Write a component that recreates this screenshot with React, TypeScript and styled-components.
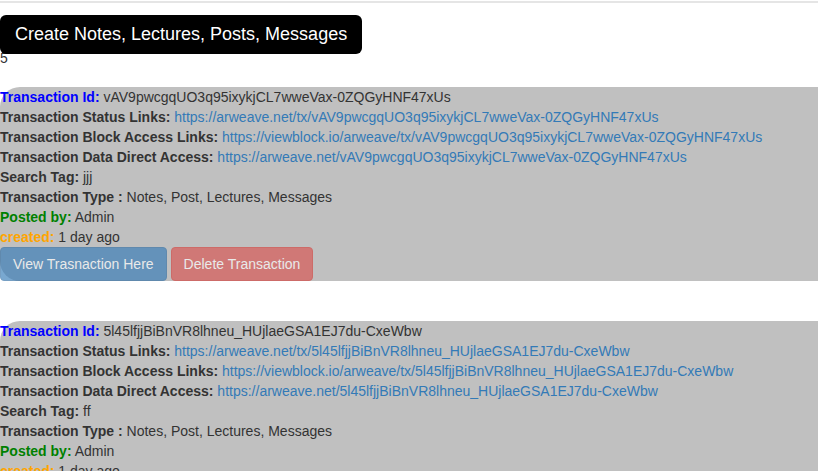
import styled, { createGlobalStyle } from "styled-components";

const GlobalStyle = createGlobalStyle`
  html, body {
    margin: 0;
    padding: 0;
    background: #fff;
  }
  body {
    font-family: "Liberation Sans", Arial, Helvetica, sans-serif;
    font-size: 14px;
    line-height: 20px;
    color: #333;
  }
`;

const Page = styled.div`
  border-top: 2px solid #e5e5e5;
  margin-top: 1px;
  padding-top: 12px;
`;

const CreateButton = styled.button`
  position: relative;
  z-index: 1;
  display: block;
  margin: 0 0 -6px 0;
  padding: 0 15px;
  height: 39px;
  border: none;
  border-radius: 6px;
  background: #000;
  color: #fff;
  font-family: "Liberation Sans", Arial, sans-serif;
  font-size: 18px;
  cursor: pointer;
`;

const Counter = styled.div`
  margin-bottom: 19px;
`;

const List = styled.div`
  display: flex;
  flex-direction: column;
  gap: 40px;
`;

const Card = styled.div`
  background: #c0c0c0;
  border-radius: 20px 0 0 20px;
`;

const Row = styled.div`
  white-space: nowrap;
`;

const Label = styled.b<{ $tone?: string }>`
  color: ${(p) => p.$tone || "#333"};
`;

const Link = styled.a`
  color: #337ab7;
  text-decoration: none;
`;

const Actions = styled.div`
  display: flex;
  gap: 4px;
`;

const Button = styled.button<{ $kind: "primary" | "danger" }>`
  height: 34px;
  padding: 6px 12px;
  border: 1px solid ${(p) => (p.$kind === "primary" ? "#2e6da4" : "#d43f3a")};
  border-radius: 4px;
  background: ${(p) => (p.$kind === "primary" ? "#337ab7" : "#d9534f")};
  color: #fff;
  font-family: "Liberation Sans", Arial, sans-serif;
  font-size: 14px;
  line-height: 20px;
  opacity: 0.65;
  cursor: not-allowed;
`;

type Tx = { id: string; tag: string };

const txs: Tx[] = [
  { id: "vAV9pwcgqUO3q95ixykjCL7wweVax-0ZQGyHNF47xUs", tag: "jjj" },
  { id: "5l45lfjjBiBnVR8lhneu_HUjlaeGSA1EJ7du-CxeWbw", tag: "ff" },
];

function TxCard({ tx }: { tx: Tx }) {
  const status = `https://arweave.net/tx/${tx.id}`;
  const block = `https://viewblock.io/arweave/tx/${tx.id}`;
  const data = `https://arweave.net/${tx.id}`;
  return (
    <Card>
      <Row>
        <Label $tone="#0000ff">Transaction Id:</Label> {tx.id}
      </Row>
      <Row>
        <Label>Transaction Status Links:</Label> <Link href="#">{status}</Link>
      </Row>
      <Row>
        <Label>Transaction Block Access Links:</Label> <Link href="#">{block}</Link>
      </Row>
      <Row>
        <Label>Transaction Data Direct Access:</Label> <Link href="#">{data}</Link>
      </Row>
      <Row>
        <Label>Search Tag:</Label> {tx.tag}
      </Row>
      <Row>
        <Label>Transaction Type :</Label> Notes, Post, Lectures, Messages
      </Row>
      <Row>
        <Label $tone="#008000">Posted by:</Label> Admin
      </Row>
      <Row>
        <Label $tone="#ffa500">created:</Label> 1 day ago
      </Row>
      <Actions>
        <Button $kind="primary" disabled>
          View Trasnaction Here
        </Button>
        <Button $kind="danger" disabled>
          Delete Transaction
        </Button>
      </Actions>
    </Card>
  );
}

export default function App() {
  return (
    <>
      <GlobalStyle />
      <Page>
        <CreateButton>Create Notes, Lectures, Posts, Messages</CreateButton>
        <Counter>5</Counter>
        <List>
          {txs.map((tx) => (
            <TxCard key={tx.id} tx={tx} />
          ))}
        </List>
      </Page>
    </>
  );
}
